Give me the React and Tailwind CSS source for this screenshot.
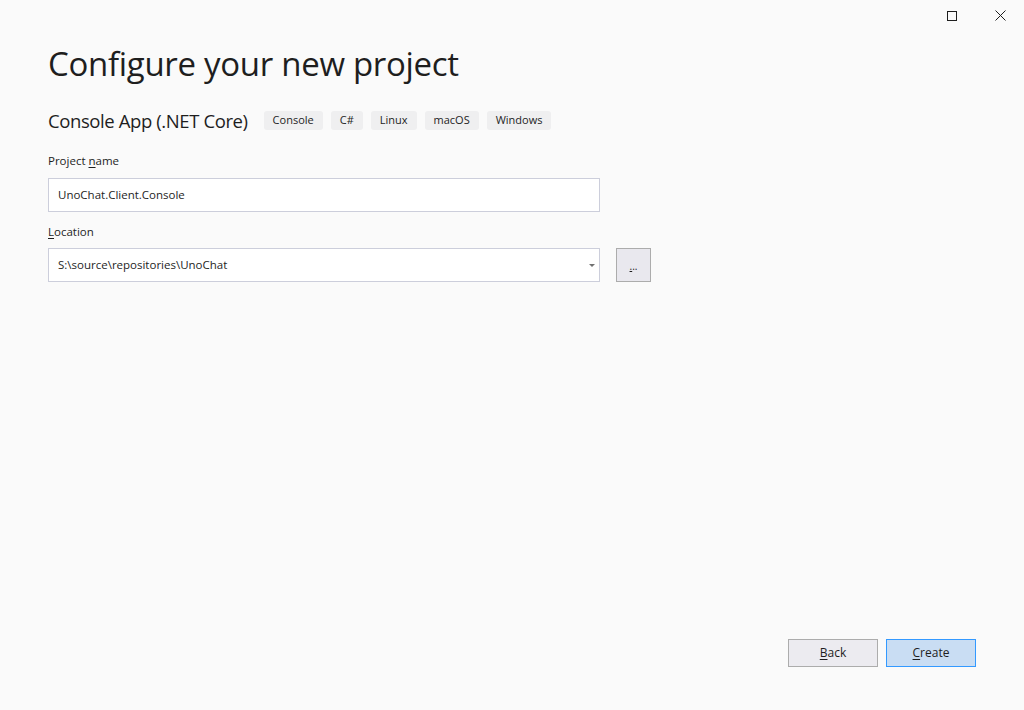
export default function App() {
  const tags = ["Console", "C#", "Linux", "macOS", "Windows"];
  return (
    <div
      className="relative w-[1024px] h-[710px] bg-[#fafafa] text-[#1e1e1e] overflow-hidden flex flex-col"
      style={{ fontFamily: '"Open Sans", "Noto Sans", sans-serif' }}
    >
      <div className="absolute top-[10px] right-[18px] flex items-center gap-[38px]">
        <div className="w-[10px] h-[10px] border border-[#1e1e1e]" />
        <svg width="11" height="11" viewBox="0 0 11 11" className="text-[#1e1e1e]">
          <path d="M0.5 0.5 L10.5 10.5 M10.5 0.5 L0.5 10.5" stroke="currentColor" strokeWidth="1" />
        </svg>
      </div>

      <div className="pl-[48px] pt-[42px] flex flex-col">
        <h1 className="text-[33px] leading-[44px] tracking-[-0.3px] font-normal">Configure your new project</h1>

        <div className="mt-[18px] flex items-center h-[33px]">
          <span className="text-[18.5px] tracking-[-0.4px] mr-[16px]">Console App (.NET Core)</span>
          <div className="flex gap-[8px]">
            {tags.map((t) => (
              <span key={t} className="h-[19px] px-[9px] flex items-center rounded-[3px] bg-[#efeff0] text-[11px]">
                {t}
              </span>
            ))}
          </div>
        </div>

        <label className="mt-[15px] text-[11.5px] leading-[17px]">
          Project <span className="underline underline-offset-2">n</span>ame
        </label>
        <div className="mt-[9px] w-[552px] h-[34px] bg-white border border-[#cccedb] flex items-center px-[9px] text-[11.5px]">
          UnoChat.Client.Console
        </div>

        <label className="mt-[11px] text-[11.5px] leading-[17px]">
          <span className="underline underline-offset-2">L</span>ocation
        </label>
        <div className="mt-[8px] flex gap-[16px]">
          <div className="w-[552px] h-[34px] bg-white border border-[#cccedb] flex items-center justify-between pl-[9px] pr-[4px] text-[11.5px]">
            <span>S:\source\repositories\UnoChat</span>
            <svg width="6" height="3" viewBox="0 0 6 3">
              <path d="M0 0 H6 L3 3 Z" fill="#717171" />
            </svg>
          </div>
          <button className="w-[35px] h-[34px] bg-[#e9e8ee] border border-[#acacac] flex items-end justify-center pb-[10px] text-[10px] leading-none">
            <span className="underline">.</span>..
          </button>
        </div>
      </div>

      <div className="mt-auto mb-[43px] mr-[48px] flex justify-end gap-[8px]">
        <button className="w-[90px] h-[28px] bg-[#ecebf0] border border-[#acacac] text-[12px]">
          <span className="underline underline-offset-2">B</span>ack
        </button>
        <button className="w-[90px] h-[28px] bg-[#c9ddf3] border border-[#3399ff] text-[12px]">
          <span className="underline underline-offset-2">C</span>reate
        </button>
      </div>
    </div>
  );
}
